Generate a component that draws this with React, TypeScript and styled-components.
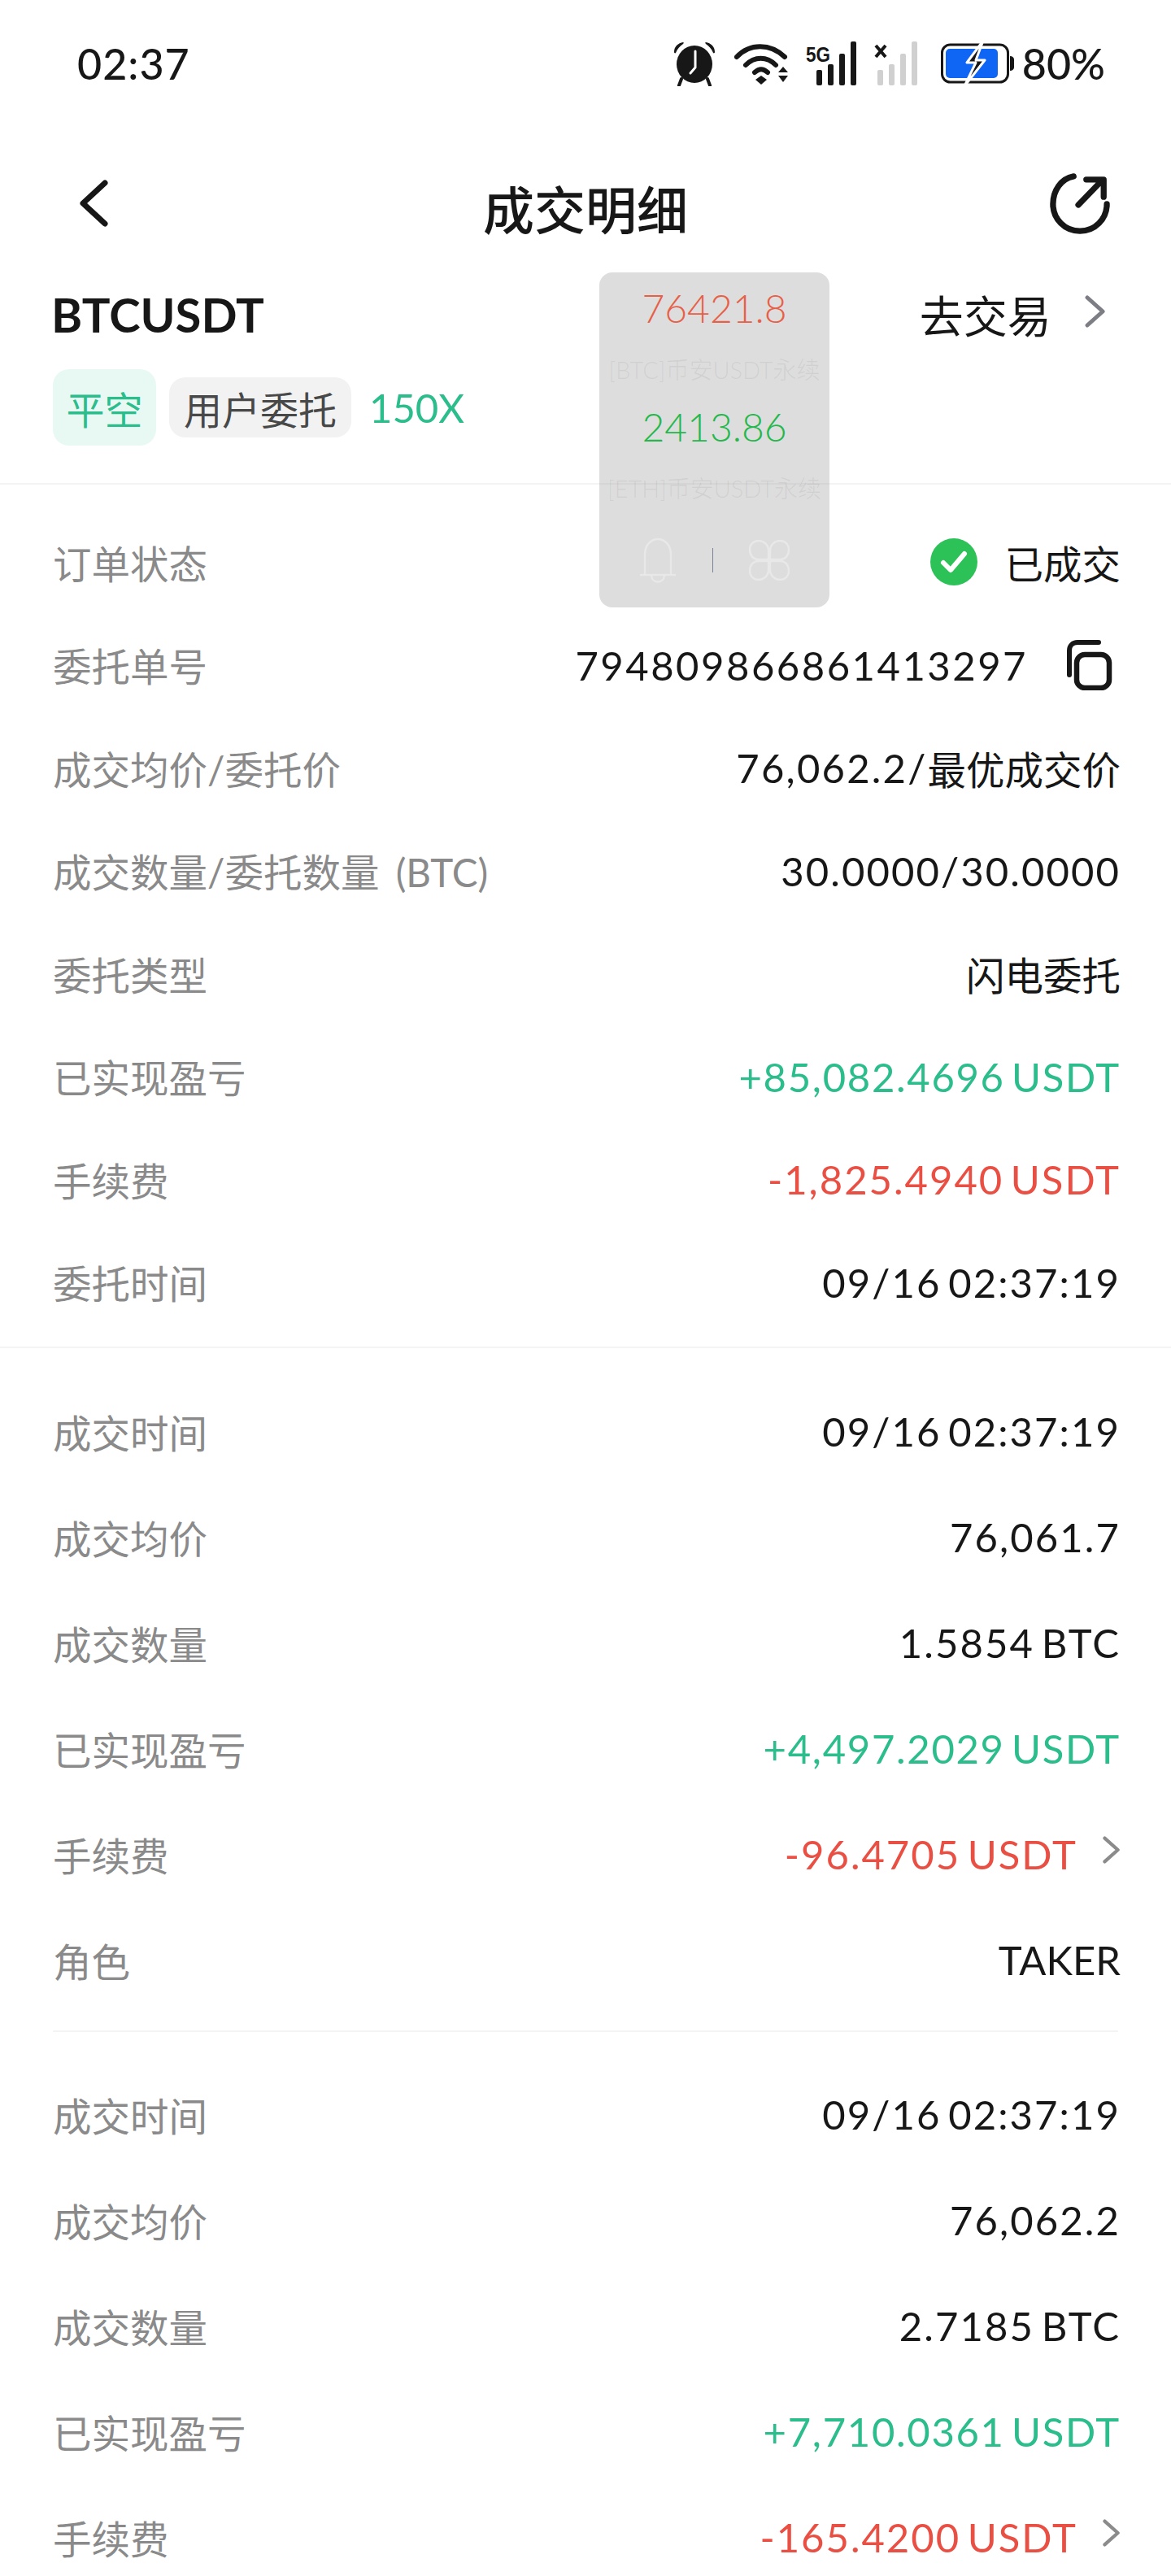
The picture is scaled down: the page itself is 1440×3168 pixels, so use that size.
import React from 'react'
import styled, { createGlobalStyle } from 'styled-components'

const GlobalStyle = createGlobalStyle`
  html, body {
    margin: 0;
    padding: 0;
    background: #fff;
  }
  body {
    font-family: "Lato", "Noto Sans CJK SC", sans-serif;
    color: #171717;
  }
`

const Page = styled.div`
  position: relative;
  width: 1440px;
  height: 3168px;
  overflow: hidden;
  background: #fff;
`

const StatusBar = styled.div`
  height: 156px;
  display: flex;
  align-items: center;
  justify-content: space-between;
  padding: 0 81px 0 95px;
`

const Clock = styled.span`
  font-size: 52px;
  font-weight: 500;
  letter-spacing: 1px;
`

const StatusIcons = styled.div`
  display: flex;
  align-items: center;
`

const IconSlot = styled.span<{ $gap: number }>`
  display: flex;
  margin-right: ${p => p.$gap}px;
`

const Percent = styled.span`
  font-size: 52px;
  font-weight: 500;
`

const NavBar = styled.div`
  height: 200px;
  margin: -2px 0 -8px;
  display: flex;
  align-items: center;
  justify-content: space-between;
  padding: 0 75px 0 97px;
`

const NavIcon = styled.span`
  display: flex;
  margin-top: -8px;
`

const Title = styled.h1`
  margin: 0;
  font-size: 63px;
  font-weight: 500;
  flex: 1;
  text-align: center;
  padding-left: 16px;
`

const Header = styled.div`
  padding: 0 65px;
  height: 250px;
  border-bottom: 2px solid #f4f4f4;
  box-sizing: border-box;
`

const HeaderTop = styled.div`
  display: flex;
  justify-content: space-between;
  align-items: center;
  height: 80px;
`

const Symbol = styled.span`
  font-size: 58px;
  font-weight: 700;
  margin-left: -2px;
`

const TradeLink = styled.div`
  display: flex;
  align-items: center;
  gap: 40px;
  font-size: 54px;
  margin-right: 15px;
`

const TradeArrow = styled.span`
  display: flex;
  margin-top: -6px;
`

const Tags = styled.div`
  display: flex;
  align-items: center;
  gap: 16px;
  margin-top: 28px;
`

const Tag = styled.span<{ $tone: 'green' | 'gray' }>`
  display: flex;
  align-items: center;
  justify-content: center;
  font-size: 47px;
  border-radius: 20px;
  height: ${p => (p.$tone === 'green' ? 94 : 74)}px;
  width: ${p => (p.$tone === 'green' ? 127 : 224)}px;
  background: ${p => (p.$tone === 'green' ? '#e8f9f3' : '#f2f2f2')};
  color: ${p => (p.$tone === 'green' ? '#2bbd8c' : '#484848')};
`

const Leverage = styled.span`
  font-size: 49px;
  color: #2bbd8c;
  margin-left: 6px;
`

const Section = styled.section<{ $top: number; $bottom: number }>`
  padding: ${p => p.$top}px 65px ${p => p.$bottom}px;
`

const Divider = styled.div<{ $inset?: boolean }>`
  height: 2px;
  background: #f4f4f4;
  margin: 0 ${p => (p.$inset ? 65 : 0)}px;
`

const Row = styled.div<{ $h: number }>`
  height: ${p => p.$h}px;
  display: flex;
  align-items: center;
  justify-content: space-between;
`

const Label = styled.span`
  font-size: 47.5px;
  color: #8a8a8a;
  white-space: nowrap;
  word-spacing: 8px;
`

const toneColor = { up: '#2bbd8c', down: '#ea4f43' }
const toneTrack = { up: 1.7, down: 2 }

const Value = styled.span<{ $tone?: 'up' | 'down'; $track?: number }>`
  display: flex;
  align-items: center;
  font-size: 49px;
  font-weight: 400;
  letter-spacing: ${p => p.$track ?? (p.$tone ? toneTrack[p.$tone] : 2.1)}px;
  word-spacing: -6px;
  white-space: nowrap;
  margin-right: -3px;
  color: ${p => (p.$tone ? toneColor[p.$tone] : '#171717')};
`

const Cjk = styled.span`
  font-size: 47.5px;
  letter-spacing: 0;
`

const Floating = styled.div`
  position: absolute;
  left: 737px;
  top: 335px;
  width: 283px;
  height: 412px;
  border-radius: 16px;
  background: rgba(120, 120, 120, 0.25);
  display: flex;
  flex-direction: column;
  align-items: center;
  padding-top: 6px;
  box-sizing: border-box;
`

const Price = styled.div<{ $up?: boolean }>`
  font-size: 48px;
  font-weight: 300;
  height: 76px;
  line-height: 76px;
  color: ${p => (p.$up ? '#22b84a' : '#e85f48')};
`

const Market = styled.div`
  font-size: 29px;
  font-weight: 300;
  height: 70px;
  line-height: 76px;
  color: rgba(120, 120, 120, 0.13);
  white-space: nowrap;
`

const FloatTools = styled.div`
  display: flex;
  align-items: center;
  gap: 44px;
  margin-top: 28px;
`

const ToolSep = styled.i`
  width: 1px;
  height: 30px;
  background: #7b8196;
`

const CheckBadge = styled.svg`
  margin-right: 34px;
`

const CopyIcon = styled.svg`
  margin-left: 42px;
  margin-right: 10px;
`

const ArrowGap = styled.span`
  display: inline-flex;
  margin-left: 30px;
  margin-top: -10px;
`

const Chevron = ({ size = 40, color = '#8b8b8b' }: { size?: number; color?: string }) => (
  <svg width={size * 0.68} height={size} viewBox="0 0 27 40" fill="none">
    <path d="M4 3l19 17L4 37" stroke={color} strokeWidth="5" strokeLinecap="round" strokeLinejoin="round" />
  </svg>
)

const Alarm = () => (
  <svg width="54" height="56" viewBox="0 0 54 56">
    <path d="M2 14C2 7 7 3 13 2c1 0 1 1 0 2C9 7 6 10 4 15c-1 1-2 0-2-1zM52 14c0-7-5-11-11-12-1 0-1 1 0 2 4 3 7 6 9 11 1 1 2 0 2-1z" fill="#171717" />
    <ellipse cx="27" cy="29" rx="22" ry="23" fill="#171717" />
    <path d="M11 47l-3 8M43 47l3 8" stroke="#171717" strokeWidth="4" strokeLinecap="round" />
    <path d="M28 13v20l-6 7" stroke="#fff" strokeWidth="3" fill="none" strokeLinecap="round" />
  </svg>
)

const Wifi = () => (
  <svg width="70" height="52" viewBox="0 0 70 52" fill="none">
    <path d="M3 18C19 1 44 1 62 18" stroke="#171717" strokeWidth="6" strokeLinecap="round" />
    <path d="M14 28c11-11 26-11 37 0" stroke="#171717" strokeWidth="6" strokeLinecap="round" />
    <path d="M25 37c6-5 10-5 16 0" stroke="#171717" strokeWidth="6" strokeLinecap="round" />
    <path d="M33 41l7 5-7 6-7-6z" fill="#171717" />
    <path d="M60 30l6 7H54zM54 41h12l-6 8z" fill="#171717" />
  </svg>
)

const Signal = () => (
  <svg width="66" height="54" viewBox="0 0 66 54">
    <text x="0" y="25" fontFamily="Liberation Sans, sans-serif" fontWeight="700" fontSize="26" textLength="30" lengthAdjust="spacingAndGlyphs" fill="#171717">5G</text>
    <rect x="13" y="35" width="7" height="19" rx="2" fill="#171717" />
    <rect x="27" y="28" width="7" height="26" rx="2" fill="#171717" />
    <rect x="41" y="15" width="7" height="39" rx="2" fill="#171717" />
    <rect x="55" y="0" width="7" height="54" rx="2" fill="#171717" />
  </svg>
)

const SignalOff = () => (
  <svg width="58" height="54" viewBox="0 0 58 54">
    <path d="M2 5l12 14M14 5L2 19" stroke="#171717" strokeWidth="4" />
    <rect x="4" y="35" width="7" height="19" rx="2" fill="#d0d0d0" />
    <rect x="18" y="28" width="7" height="26" rx="2" fill="#d0d0d0" />
    <rect x="32" y="15" width="7" height="39" rx="2" fill="#d0d0d0" />
    <rect x="46" y="0" width="7" height="54" rx="2" fill="#d0d0d0" />
  </svg>
)

const Battery = () => (
  <svg width="90" height="56" viewBox="0 0 90 56">
    <rect x="1.5" y="5" width="81" height="46" rx="10" fill="none" stroke="#171717" strokeWidth="3" />
    <path d="M85 19c3 0 5 2 5 4v10c0 2-2 4-5 4z" fill="#171717" />
    <rect x="6" y="10" width="64" height="36" rx="5" fill="#0f66f5" />
    <path d="M52 0L32 27h11L29 56l25-32H43z" fill="#171717" stroke="#fff" strokeWidth="3" strokeLinejoin="round" />
  </svg>
)

const Share = () => (
  <svg width="74" height="76" viewBox="0 0 76 78" fill="none">
    <path d="M30 5C14 8 4 23 4 40c0 19 15 34 34 34s34-15 34-34" stroke="#171717" strokeWidth="7.5" strokeLinecap="round" />
    <path d="M36 41L66 10M46 9h22v22" stroke="#171717" strokeWidth="7.5" strokeLinecap="round" strokeLinejoin="round" />
  </svg>
)

const Bell = () => (
  <svg width="46" height="56" viewBox="0 0 46 56" fill="none" stroke="#e8e8e8" strokeWidth="2.5">
    <path d="M7 46V21C7 10 14 2 23 2s16 8 16 19v25" />
    <path d="M1 46h44M15 47c1 10 15 10 16 0" />
  </svg>
)

const Clover = () => (
  <svg width="50" height="50" viewBox="0 0 50 50" fill="none" stroke="#e8e8e8" strokeWidth="2.5">
    <path d="M24 24H12C5 24 1 19 1 12S6 1 12 1s12 5 12 12z" />
    <path d="M26 24h12c7 0 11-5 11-12S44 1 38 1 26 6 26 13z" />
    <path d="M24 26H12C5 26 1 31 1 38s5 11 11 11 12-5 12-12z" />
    <path d="M26 26h12c7 0 11 5 11 12s-5 11-11 11-12-5-12-12z" />
  </svg>
)

type Item = { label: string; value: React.ReactNode; tone?: 'up' | 'down'; arrow?: boolean; track?: number }

const orderRows: Item[] = [
  { label: '成交均价/委托价', value: <>76,062.2/<Cjk>最优成交价</Cjk></>, track: 2.2 },
  { label: '成交数量/委托数量 (BTC)', value: '30.0000/30.0000' },
  { label: '委托类型', value: <Cjk>闪电委托</Cjk> },
  { label: '已实现盈亏', value: '+85,082.4696 USDT', tone: 'up' },
  { label: '手续费', value: '-1,825.4940 USDT', tone: 'down' },
  { label: '委托时间', value: '09/16 02:37:19' },
]

const fillA: Item[] = [
  { label: '成交时间', value: '09/16 02:37:19' },
  { label: '成交均价', value: '76,061.7' },
  { label: '成交数量', value: '1.5854 BTC' },
  { label: '已实现盈亏', value: '+4,497.2029 USDT', tone: 'up' },
  { label: '手续费', value: '-96.4705 USDT', tone: 'down', arrow: true },
  { label: '角色', value: 'TAKER', track: 0 },
]

const fillB: Item[] = [
  { label: '成交时间', value: '09/16 02:37:19' },
  { label: '成交均价', value: '76,062.2' },
  { label: '成交数量', value: '2.7185 BTC' },
  { label: '已实现盈亏', value: '+7,710.0361 USDT', tone: 'up' },
  { label: '手续费', value: '-165.4200 USDT', tone: 'down', arrow: true },
]

const DetailRow = ({ item, h }: { item: Item; h: number }) => (
  <Row $h={h}>
    <Label>{item.label}</Label>
    <Value $tone={item.tone} $track={item.track}>
      {item.value}
      {item.arrow && (
        <ArrowGap>
          <Chevron size={34} />
        </ArrowGap>
      )}
    </Value>
  </Row>
)

export default function App() {
  return (
    <Page>
      <GlobalStyle />
      <StatusBar>
        <Clock>02:37</Clock>
        <StatusIcons>
          <IconSlot $gap={22}><Alarm /></IconSlot>
          <IconSlot $gap={18}><Wifi /></IconSlot>
          <IconSlot $gap={18}><Signal /></IconSlot>
          <IconSlot $gap={24}><SignalOff /></IconSlot>
          <IconSlot $gap={10}><Battery /></IconSlot>
          <Percent>80%</Percent>
        </StatusIcons>
      </StatusBar>

      <NavBar>
        <NavIcon>
          <svg width="36" height="58" viewBox="0 0 36 58" fill="none">
            <path d="M32 4L5 29l27 25" stroke="#171717" strokeWidth="7" strokeLinecap="round" strokeLinejoin="round" />
          </svg>
        </NavIcon>
        <Title>成交明细</Title>
        <NavIcon>
          <Share />
        </NavIcon>
      </NavBar>

      <Header>
        <HeaderTop>
          <Symbol>BTCUSDT</Symbol>
          <TradeLink>
            去交易
            <TradeArrow>
              <Chevron size={40} color="#7d7d85" />
            </TradeArrow>
          </TradeLink>
        </HeaderTop>
        <Tags>
          <Tag $tone="green">平空</Tag>
          <Tag $tone="gray">用户委托</Tag>
          <Leverage>150X</Leverage>
        </Tags>
      </Header>

      <Section $top={32} $bottom={16}>
        <Row $h={126.5}>
          <Label>订单状态</Label>
          <Value>
            <CheckBadge width="58" height="58" viewBox="0 0 58 58">
              <circle cx="29" cy="29" r="29" fill="#2cc258" />
              <path d="M16 30l9 9 17-20" stroke="#fff" strokeWidth="6" fill="none" strokeLinecap="round" strokeLinejoin="round" />
            </CheckBadge>
            <Cjk>已成交</Cjk>
          </Value>
        </Row>
        <Row $h={126.5}>
          <Label>委托单号</Label>
          <Value $track={2.5}>
            794809866861413297
            <CopyIcon width="62" height="62" viewBox="0 0 62 62" fill="none" stroke="#171717">
              <path d="M9 43V13C9 7 13 3 19 3h26" strokeWidth="6" strokeLinecap="round" />
              <rect x="18" y="18" width="40" height="41" rx="10" strokeWidth="6.5" />
            </CopyIcon>
          </Value>
        </Row>
        {orderRows.map(r => (
          <DetailRow key={r.label} item={r} h={126.5} />
        ))}
      </Section>
      <Divider />

      <Section $top={37} $bottom={22}>
        {fillA.map(r => (
          <DetailRow key={r.label} item={r} h={130} />
        ))}
      </Section>
      <Divider $inset />

      <Section $top={36} $bottom={0}>
        {fillB.map(r => (
          <DetailRow key={r.label} item={r} h={130} />
        ))}
      </Section>

      <Floating>
        <Price>76421.8</Price>
        <Market>[BTC]币安USDT永续</Market>
        <Price $up>2413.86</Price>
        <Market>[ETH]币安USDT永续</Market>
        <FloatTools>
          <Bell />
          <ToolSep />
          <Clover />
        </FloatTools>
      </Floating>
    </Page>
  )
}
